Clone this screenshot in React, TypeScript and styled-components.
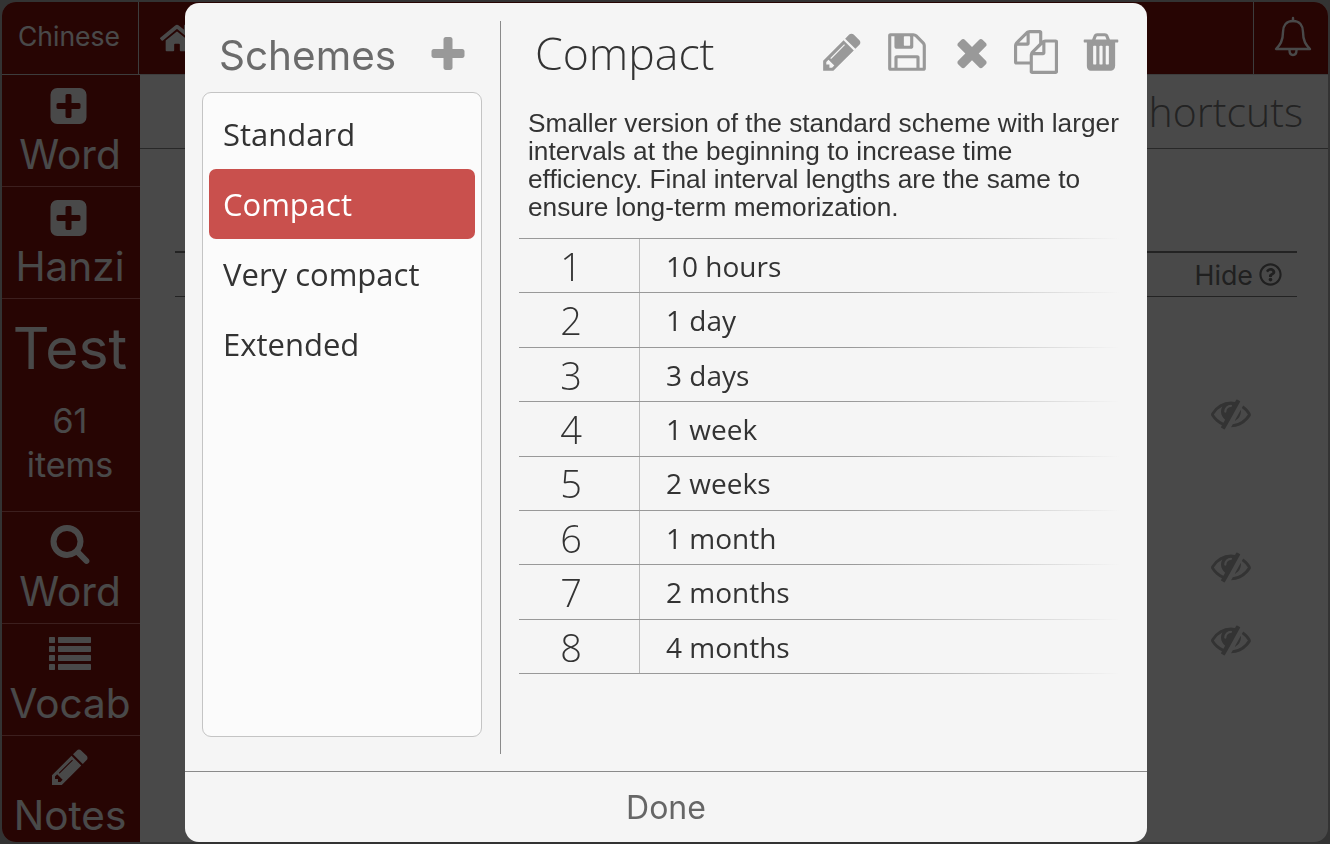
import React from 'react';
import styled, { createGlobalStyle } from 'styled-components';
import { FaHome, FaRegQuestionCircle } from 'react-icons/fa';

const GlobalStyle = createGlobalStyle`
  html, body {
    margin: 0;
    height: 100%;
    overflow: hidden;
    background: #aaa;
  }
  * { box-sizing: border-box; }
`;

const HEAD_FONT = `'Inter', 'Liberation Sans', sans-serif`;
const BODY_FONT = `'Open Sans', 'Liberation Sans', sans-serif`;

// font-awesome 4 glyphs, the app draws its icons from that set
const GLYPHS = {
  plus: 'M1600 736v192q0 40-28 68t-68 28h-416v416q0 40-28 68t-68 28h-192q-40 0-68-28t-28-68v-416h-416q-40 0-68-28t-28-68v-192q0-40 28-68t68-28h416v-416q0-40 28-68t68-28h192q40 0 68 28t28 68v416h416q40 0 68 28t28 68z',
  plusSquare: 'M1344 960v-128q0-26-19-45t-45-19h-320v-320q0-26-19-45t-45-19h-128q-26 0-45 19t-19 45v320h-320q-26 0-45 19t-19 45v128q0 26 19 45t45 19h320v320q0 26 19 45t45 19h128q26 0 45-19t19-45v-320h320q26 0 45-19t19-45zm256-544v960q0 119-84.5 203.5t-203.5 84.5h-960q-119 0-203.5-84.5t-84.5-203.5v-960q0-119 84.5-203.5t203.5-84.5h960q119 0 203.5 84.5t84.5 203.5z',
  search: 'M1216 832q0-185-131.5-316.5t-316.5-131.5-316.5 131.5-131.5 316.5 131.5 316.5 316.5 131.5 316.5-131.5 131.5-316.5zm512 832q0 52-38 90t-90 38q-54 0-90-38l-343-342q-179 124-399 124-143 0-273.5-55.5t-225-150-150-225-55.5-273.5 55.5-273.5 150-225 225-150 273.5-55.5 273.5 55.5 225 150 150 225 55.5 273.5q0 220-124 399l343 343q37 37 37 90z',
  list: 'M256 1312v192q0 13-9.5 22.5t-22.5 9.5h-192q-13 0-22.5-9.5t-9.5-22.5v-192q0-13 9.5-22.5t22.5-9.5h192q13 0 22.5 9.5t9.5 22.5zm0-384v192q0 13-9.5 22.5t-22.5 9.5h-192q-13 0-22.5-9.5t-9.5-22.5v-192q0-13 9.5-22.5t22.5-9.5h192q13 0 22.5 9.5t9.5 22.5zm0-384v192q0 13-9.5 22.5t-22.5 9.5h-192q-13 0-22.5-9.5t-9.5-22.5v-192q0-13 9.5-22.5t22.5-9.5h192q13 0 22.5 9.5t9.5 22.5zm1536 768v192q0 13-9.5 22.5t-22.5 9.5h-1344q-13 0-22.5-9.5t-9.5-22.5v-192q0-13 9.5-22.5t22.5-9.5h1344q13 0 22.5 9.5t9.5 22.5zm-1536-1152v192q0 13-9.5 22.5t-22.5 9.5h-192q-13 0-22.5-9.5t-9.5-22.5v-192q0-13 9.5-22.5t22.5-9.5h192q13 0 22.5 9.5t9.5 22.5zm1536 768v192q0 13-9.5 22.5t-22.5 9.5h-1344q-13 0-22.5-9.5t-9.5-22.5v-192q0-13 9.5-22.5t22.5-9.5h1344q13 0 22.5 9.5t9.5 22.5zm0-384v192q0 13-9.5 22.5t-22.5 9.5h-1344q-13 0-22.5-9.5t-9.5-22.5v-192q0-13 9.5-22.5t22.5-9.5h1344q13 0 22.5 9.5t9.5 22.5zm0-384v192q0 13-9.5 22.5t-22.5 9.5h-1344q-13 0-22.5-9.5t-9.5-22.5v-192q0-13 9.5-22.5t22.5-9.5h1344q13 0 22.5 9.5t9.5 22.5z',
  pencil: 'M491 1536l91-91-235-235-91 91v107h128v128h107zm523-928q0-22-22-22-10 0-17 7l-542 542q-7 7-7 17 0 22 22 22 10 0 17-7l542-542q7-7 7-17zm-54-192l416 416-832 832h-416v-416zm683 96q0 53-37 90l-166 166-416-416 166-165q36-38 90-38 53 0 91 38l235 234q37 39 37 91z',
  save: 'M512 1536h768v-384h-768v384zm896 0h128v-896q0-14-10-38.5t-20-34.5l-281-281q-10-10-34-20t-39-10v416q0 40-28 68t-68 28h-576q-40 0-68-28t-28-68v-416h-128v1280h128v-416q0-40 28-68t68-28h832q40 0 68 28t28 68v416zm-384-928v-320q0-13-9.5-22.5t-22.5-9.5h-192q-13 0-22.5 9.5t-9.5 22.5v320q0 13 9.5 22.5t22.5 9.5h192q13 0 22.5-9.5t9.5-22.5zm640 32v928q0 40-28 68t-68 28h-1344q-40 0-68-28t-28-68v-1344q0-40 28-68t68-28h928q40 0 88 20t76 48l280 280q28 28 48 76t20 88z',
  times: 'M1490 1322q0 40-28 68l-136 136q-28 28-68 28t-68-28l-294-294-294 294q-28 28-68 28t-68-28l-136-136q-28-28-28-68t28-68l294-294-294-294q-28-28-28-68t28-68l136-136q28-28 68-28t68 28l294 294 294-294q28-28 68-28t68 28l136 136q28 28 28 68t-28 68l-294 294 294 294q28 28 28 68z',
  copy: 'M1696 384q40 0 68 28t28 68v1216q0 40-28 68t-68 28h-960q-40 0-68-28t-28-68v-288h-544q-40 0-68-28t-28-68v-672q0-40 20-88t48-76l408-408q28-28 76-48t88-20h416q40 0 68 28t28 68v328q68-40 128-40h416zm-544 213l-299 299h299v-299zm-640-384l-299 299h299v-299zm196 647l316-316v-416h-384v416q0 40-28 68t-68 28h-416v640h512v-256q0-40 20-88t48-76zm956 804v-1152h-384v416q0 40-28 68t-68 28h-416v640h896z',
  trash: 'M704 1376v-704q0-14-9-23t-23-9h-64q-14 0-23 9t-9 23v704q0 14 9 23t23 9h64q14 0 23-9t9-23zm256 0v-704q0-14-9-23t-23-9h-64q-14 0-23 9t-9 23v704q0 14 9 23t23 9h64q14 0 23-9t9-23zm256 0v-704q0-14-9-23t-23-9h-64q-14 0-23 9t-9 23v704q0 14 9 23t23 9h64q14 0 23-9t9-23zm-544-992h448l-48-117q-7-9-17-11h-317q-10 2-17 11zm928 32v64q0 14-9 23t-23 9h-96v948q0 83-47 143.5t-113 60.5h-832q-66 0-113-58.5t-47-141.5v-952h-96q-14 0-23-9t-9-23v-64q0-14 9-23t23-9h309l70-167q15-37 54-63t79-26h320q40 0 79 26t54 63l70 167h309q14 0 23 9t9 23z',
  eyeSlash: 'M555 1335l78-141q-87-63-136-159t-49-203q0-121 61-225-229 117-381 353 167 258 427 375zm389-759q0-20-14-34t-34-14q-125 0-214.5 89.5t-89.5 214.5q0 20 14 34t34 14 34-14 14-34q0-86 61-147t147-61q20 0 34-14t14-34zm363-191q0 7-1 9-106 189-316 567t-315 566l-49 89q-10 16-28 16-12 0-134-70-16-10-16-28 0-12 44-87-143-65-263.5-173t-208.5-245q-20-31-20-69t20-69q153-235 380-371t496-136q89 0 180 17l54-97q10-16 28-16 5 0 18 6t31 15.5 33 18.5 31.5 18.5 19.5 11.5q16 10 16 27zm37 447q0 139-79 253.5t-209 164.5l280-502q8 45 8 84zm448 128q0 35-20 69-39 64-109 145-150 172-347.5 267t-416.5 95l74-132q209-18 385.5-135t294.5-308q-112-174-274-286l63-112q92 62 176.5 148t139.5 179q20 34 20 69z',
};

const Glyph = ({ name, size }: { name: keyof typeof GLYPHS; size: number }) => (
  <svg width={size} height={size} viewBox="0 0 1792 1792" fill="currentColor">
    <path d={GLYPHS[name]} />
  </svg>
);

const BellOutline = () => (
  <svg width="38" height="42" viewBox="0 0 38 42" fill="none" stroke="currentColor" strokeWidth="2.4" strokeLinejoin="round" strokeLinecap="round">
    <path d="M19 5C12 5 9 10 9 16C9 25 6 29 2 33H36C32 29 29 25 29 16C29 10 26 5 19 5Z" />
    <path d="M19 2V5" />
    <path d="M15.5 34C15.5 37 17 39 19 39C21 39 22.5 37 22.5 34" />
  </svg>
);

const Frame = styled.div`
  width: 1330px;
  height: 844px;
  padding: 2px;
  display: flex;
  flex-direction: column;
`;

const Shell = styled.div`
  flex: 1;
  display: flex;
  flex-direction: column;
  border-radius: 14px;
  overflow: hidden;
  background: #f5f5f5;
`;

const TopBar = styled.header`
  height: 73px;
  flex: none;
  display: flex;
  background: #82110d;
  border-bottom: 1px solid #ccc;
`;

const LangCell = styled.div`
  width: 137px;
  flex: none;
  display: flex;
  align-items: center;
  justify-content: center;
  padding: 0 2px 5px 0;
  border-right: 1px solid #ccc;
  color: #f5f5f5;
  font: 400 26.5px ${HEAD_FONT};
`;

const HomeCell = styled.div`
  width: 72px;
  flex: none;
  display: flex;
  align-items: center;
  justify-content: center;
  padding-left: 4px;
  color: #f5f5f5;
  font-size: 34px;
`;

const TopSpacer = styled.div`
  flex: 1;
  border-right: 1px solid #ccc;
`;

const Bell = styled.div`
  width: 74px;
  flex: none;
  display: flex;
  align-items: center;
  justify-content: center;
  padding: 0 0 2px 4px;
  color: #f5f5f5;
`;

const Body = styled.div`
  flex: 1;
  display: flex;
  min-height: 0;
`;

const Sidebar = styled.nav`
  width: 138px;
  flex: none;
  background: #82110d;
  display: flex;
  flex-direction: column;
`;

const NavItem = styled.div<{ $h?: number }>`
  height: ${p => p.$h || 112}px;
  flex: none;
  display: flex;
  flex-direction: column;
  align-items: center;
  padding: 10px 2px 0 0;
  border-bottom: 1px solid #c86a66;
  color: #f5f5f5;
  font: 400 40.5px/56px ${HEAD_FONT};
  svg { display: block; }
`;

const TestLabel = styled.div`
  margin-top: 4px;
  font: 400 57px/72px ${HEAD_FONT};
`;

const TestCount = styled.div`
  font: 400 34px/44px ${HEAD_FONT};
  text-align: center;
  margin-top: 14px;
`;

const Main = styled.main`
  flex: 1;
  display: flex;
  flex-direction: column;
`;

const MainHead = styled.div`
  height: 74px;
  flex: none;
  display: flex;
  align-items: center;
  justify-content: flex-end;
  padding: 0 25px 2px 0;
  border-bottom: 1px solid #888;
  color: #777;
  font: 300 41px ${BODY_FONT};
`;

const MainInner = styled.div`
  padding: 102px 31px 0 35px;
`;

const ShortcutHead = styled.div`
  height: 46px;
  display: flex;
  align-items: center;
  justify-content: flex-end;
  gap: 6px;
  padding-right: 15px;
  border-top: 2px solid #777;
  border-bottom: 1px solid #777;
  color: #6c6c6c;
  font: 400 26.8px ${HEAD_FONT};
  svg { font-size: 23px; }
`;

const ShortcutRow = styled.div<{ $h: number }>`
  height: ${p => p.$h}px;
  display: flex;
  align-items: center;
  justify-content: flex-end;
  padding-right: 46px;
  color: #aaa;
`;

const Overlay = styled.div`
  position: fixed;
  inset: 0;
  background: rgba(0, 0, 0, 0.7);
  padding: 3px 183px 2px 185px;
`;

const Modal = styled.div`
  height: 100%;
  display: flex;
  flex-direction: column;
  background: #f5f5f5;
  border-radius: 14px;
  overflow: hidden;
`;

const ModalBody = styled.div`
  flex: 1;
  min-height: 0;
  display: flex;
  padding-top: 18px;
  padding-bottom: 17px;
`;

const SchemePane = styled.aside`
  width: 316px;
  flex: none;
  padding: 0 18px 17px 17px;
  border-right: 1px solid #8a8a8a;
  display: flex;
  flex-direction: column;
`;

const SchemeHead = styled.div`
  height: 71px;
  flex: none;
  display: flex;
  align-items: center;
  justify-content: space-between;
  padding: 0 13px 3px 17px;
  color: #6b6b6b;
  font: 400 40.5px ${HEAD_FONT};
  svg { color: #999; display: block; }
`;

const SchemeList = styled.ul`
  flex: 1;
  margin: 0;
  padding: 6px;
  list-style: none;
  background: #fbfbfb;
  border: 1px solid #c4c4c4;
  border-radius: 9px;
`;

const SchemeItem = styled.li<{ $active?: boolean }>`
  height: 70px;
  display: flex;
  align-items: center;
  padding-left: 14px;
  border-radius: 7px;
  background: ${p => (p.$active ? '#c9504d' : 'transparent')};
  color: ${p => (p.$active ? '#fff' : '#333')};
  font: 31px ${BODY_FONT};
`;

const DetailPane = styled.section`
  flex: 1;
  min-width: 0;
  padding: 0 24px 0 18px;
  display: flex;
  flex-direction: column;
`;

const DetailHead = styled.div`
  height: 62px;
  flex: none;
  display: flex;
  align-items: center;
  justify-content: space-between;
  padding-left: 16px;
`;

const DetailTitle = styled.h2`
  margin: 0;
  color: #333;
  font: 300 44.6px ${BODY_FONT};
`;

const ToolIcons = styled.div`
  display: flex;
  align-items: center;
  gap: 20.7px;
  color: #999;
  svg { display: block; }
`;

const Description = styled.p`
  margin: 26px 0 17.1px 9px;
  color: #333;
  font: 26.25px/28px 'Liberation Sans', Arial, sans-serif;
`;

const Rows = styled.div`
  width: 601px;
  display: flex;
  flex-direction: column;
`;

const Rule = styled.div`
  height: 1px;
  flex: none;
  background: linear-gradient(to right, #999 0, #999 55%, #f5f5f5 100%);
`;

const IntervalRow = styled.div`
  height: 53.4px;
  flex: none;
  display: flex;
  align-items: center;
`;

const IntervalNum = styled.div`
  width: 121px;
  height: 100%;
  flex: none;
  display: flex;
  align-items: center;
  justify-content: center;
  padding-right: 16px;
  border-right: 1px solid #bbb;
  color: #333;
  font: 300 38px ${BODY_FONT};
`;

const IntervalText = styled.div`
  padding-left: 26px;
  color: #333;
  font: 28px ${BODY_FONT};
`;

const Footer = styled.div`
  height: 71px;
  flex: none;
  display: flex;
  align-items: center;
  justify-content: center;
  border-top: 1px solid #8a8a8a;
  color: #666;
  font: 400 32px ${HEAD_FONT};
`;

const navTop = [
  { icon: 'plusSquare', label: 'Word' },
  { icon: 'plusSquare', label: 'Hanzi' },
] as const;
const navBottom = [
  { icon: 'search', label: 'Word' },
  { icon: 'list', label: 'Vocab' },
  { icon: 'pencil', label: 'Notes' },
] as const;
const schemes = ['Standard', 'Compact', 'Very compact', 'Extended'];
const intervals = ['10 hours', '1 day', '3 days', '1 week', '2 weeks', '1 month', '2 months', '4 months'];
const tools = ['pencil', 'save', 'times', 'copy', 'trash'] as const;

const App = () => (
  <>
    <GlobalStyle />
    <Frame>
      <Shell>
        <TopBar>
          <LangCell>Chinese</LangCell>
          <HomeCell><FaHome /></HomeCell>
          <TopSpacer />
          <Bell><BellOutline /></Bell>
        </TopBar>
        <Body>
          <Sidebar>
            {navTop.map(item => (
              <NavItem key={item.label}><Glyph name={item.icon} size={42} />{item.label}</NavItem>
            ))}
            <NavItem $h={213}>
              <TestLabel>Test</TestLabel>
              <TestCount>61<br />items</TestCount>
            </NavItem>
            {navBottom.map(item => (
              <NavItem key={item.label}><Glyph name={item.icon} size={42} />{item.label}</NavItem>
            ))}
          </Sidebar>
          <Main>
            <MainHead>Shortcuts</MainHead>
            <MainInner>
              <ShortcutHead>Hide <FaRegQuestionCircle /></ShortcutHead>
              <ShortcutRow $h={232}><Glyph name="eyeSlash" size={40} /></ShortcutRow>
              <ShortcutRow $h={74}><Glyph name="eyeSlash" size={40} /></ShortcutRow>
              <ShortcutRow $h={72}><Glyph name="eyeSlash" size={40} /></ShortcutRow>
            </MainInner>
          </Main>
        </Body>
      </Shell>
    </Frame>
    <Overlay>
      <Modal>
        <ModalBody>
          <SchemePane>
            <SchemeHead>Schemes <Glyph name="plus" size={42} /></SchemeHead>
            <SchemeList>
              {schemes.map(name => (
                <SchemeItem key={name} $active={name === 'Compact'}>{name}</SchemeItem>
              ))}
            </SchemeList>
          </SchemePane>
          <DetailPane>
            <DetailHead>
              <DetailTitle>Compact</DetailTitle>
              <ToolIcons>
                {tools.map(name => <Glyph key={name} name={name} size={44} />)}
              </ToolIcons>
            </DetailHead>
            <Description>
              Smaller version of the standard scheme with larger intervals at the beginning to
              increase time efficiency. Final interval lengths are the same to ensure long-term
              memorization.
            </Description>
            <Rows>
              <Rule />
              {intervals.map((text, i) => (
                <React.Fragment key={text}>
                  <IntervalRow>
                    <IntervalNum>{i + 1}</IntervalNum>
                    <IntervalText>{text}</IntervalText>
                  </IntervalRow>
                  <Rule />
                </React.Fragment>
              ))}
            </Rows>
          </DetailPane>
        </ModalBody>
        <Footer>Done</Footer>
      </Modal>
    </Overlay>
  </>
);

export default App;
